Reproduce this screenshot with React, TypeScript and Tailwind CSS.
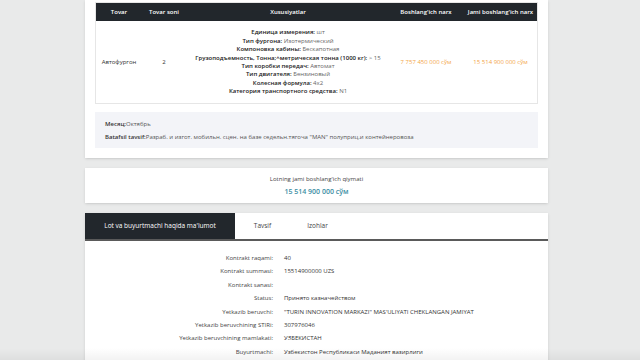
import React from 'react';

const specs: [string, string][] = [
  ['Единица измерения', 'шт'],
  ['Тип фургона', 'Изотермический'],
  ['Компоновка кабины', 'Бескапотная'],
  ['Грузоподъемность, Тонна;^метрическая тонна (1000 кг)', '> 15'],
  ['Тип коробки передач', 'Автомат'],
  ['Тип двигателя', 'Бензиновый'],
  ['Колесная формула', '4x2'],
  ['Категория транспортного средства', 'N1'],
];

const info: [string, string][] = [
  ['Kontrakt raqami:', '40'],
  ['Kontrakt summasi:', '15514900000 UZS'],
  ['Kontrakt sanasi:', ''],
  ['Status:', 'Принято казначейством'],
  ['Yetkazib beruvchi:', '"TURIN INNOVATION MARKAZI" MAS\'ULIYATI CHEKLANGAN JAMIYAT'],
  ['Yetkazib beruvchining STIRi:', '307976046'],
  ['Yetkazib beruvchining mamlakati:', 'УЗБЕКИСТАН'],
  ['Buyurtmachi:', 'Узбекистон Республикаси Маданият вазирлиги'],
];

const cols = 'grid grid-cols-[46px_44px_204px_72px_77px]';

export default function App() {
  return (
    <div
      className="relative h-[360px] w-[640px] overflow-hidden bg-[#e9eaea] text-[#333]"
      style={{ fontFamily: '"Open Sans", "Noto Sans", sans-serif' }}
    >
      <div className="ml-[85px] flex w-[463px] flex-col gap-[10px]">
        {/* products table card */}
        <div className="bg-white px-[10px] pt-[2px] pb-[10px] shadow-sm">
          <div className="border border-[#e6e6e6]">
            <div className={`${cols} h-[18px] items-center bg-[#22272c] text-center text-[6px] font-semibold text-white`}>
              <div>Tovar</div>
              <div>Tovar soni</div>
              <div>Xususiyatlar</div>
              <div>Boshlang'ich narx</div>
              <div>Jami boshlang'ich narx</div>
            </div>
            <div className={`${cols} h-[82px] items-center text-center text-[6px]`}>
              <div>Автофургон</div>
              <div>2</div>
              <div className="leading-[8.4px]">
                {specs.map(([k, v]) => (
                  <div key={k} className="whitespace-nowrap">
                    <span className="font-semibold text-[#222]">{k}:</span>{' '}
                    <span className="text-[#666]">{v}</span>
                  </div>
                ))}
              </div>
              <div className="text-[#f3a548]">7 757 450 000 сўм</div>
              <div className="text-[#f3a548]">15 514 900 000 сўм</div>
            </div>
          </div>
          <div className="mt-[8px] flex h-[36px] flex-col justify-center gap-[5px] bg-[#f3f4f8] px-[10px] text-[6px] leading-[8px]">
            <div>
              <span className="font-semibold">Месяц:</span>
              <span className="text-[#555]">Октябрь</span>
            </div>
            <div>
              <span className="font-semibold">Batafsil tavsif:</span>
              <span className="text-[#555]">Разраб. и изгот. мобильн. сцен. на базе седельн.тягоча "MAN" полуприц.и контейнеровоза</span>
            </div>
          </div>
        </div>

        {/* total card */}
        <div className="flex h-[35px] flex-col items-center justify-center bg-white shadow-sm">
          <div className="text-[6px] leading-[9px] text-[#444]">Lotning jami boshlang'ich qiymati</div>
          <div className="mt-[3px] text-[7px] font-semibold leading-[9px] text-[#3a8da3]">15 514 900 000 сўм</div>
        </div>

        {/* details card */}
        <div className="bg-white pb-[20px] shadow-sm">
          <div className="flex h-[28px] items-stretch border-b-2 border-[#5a5a5a] text-[6.5px]">
            <div className="flex w-[150px] items-center justify-center bg-[#22272c] text-white">
              Lot va buyurtmachi haqida ma'lumot
            </div>
            <div className="flex w-[55px] items-center justify-center text-[#444]">Tavsif</div>
            <div className="flex w-[55px] items-center justify-center text-[#444]">Izohlar</div>
          </div>
          <div className="grid grid-cols-[188px_1fr] gap-x-[11px] pt-[11px] text-[6px] leading-[13.4px]">
            {info.map(([k, v]) => (
              <React.Fragment key={k}>
                <div className="text-right text-[#444]">{k}</div>
                <div className="whitespace-nowrap text-[#333]">{v}</div>
              </React.Fragment>
            ))}
          </div>
        </div>
      </div>
      <div className="pointer-events-none absolute inset-x-0 bottom-0 h-[12px] bg-gradient-to-t from-black/5 to-transparent" />
    </div>
  );
}
